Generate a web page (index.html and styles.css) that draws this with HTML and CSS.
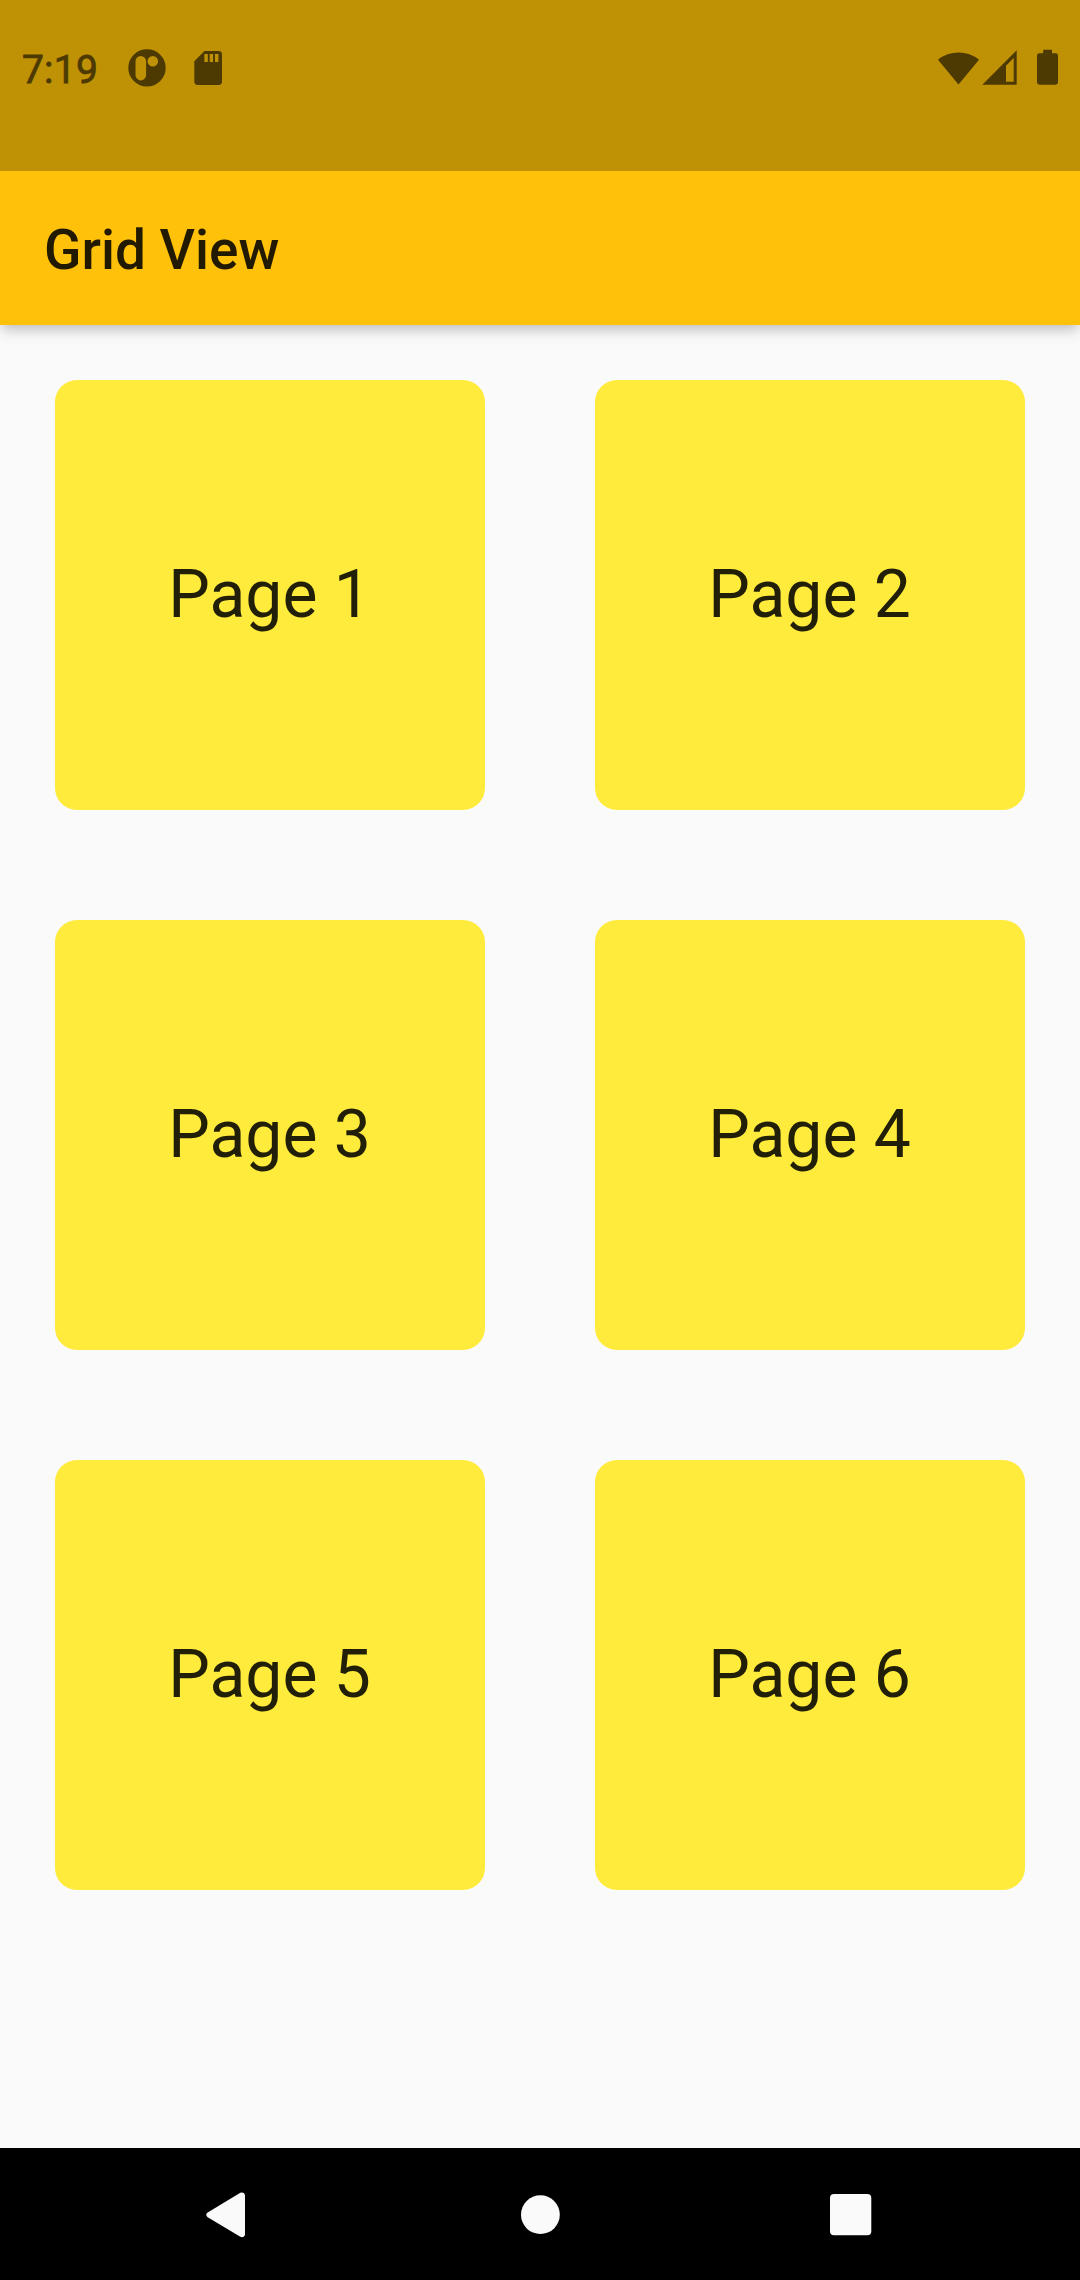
FILE: index.html
```html
<!DOCTYPE html>
<html lang="en">
<head>
<meta charset="utf-8">
<title>Grid View</title>
<link rel="stylesheet" href="styles.css">
</head>
<body>
<div class="screen">
  <div class="status-bar">
    <div class="status-group">
      <span class="clock">7:19</span>
      <svg class="icon-app" width="38" height="38" viewBox="0 0 38 38"><path fill-rule="evenodd" d="M19 .2a18.7 18.7 0 1 1 0 37.4a18.7 18.7 0 1 1 0-37.4zM12.8 7a5.3 5.3 0 0 0-5.3 5.3v13.8a5.3 5.3 0 0 0 10.6 0V12.300a5.300 5.300 0 0 0-5.300-5.300zM24.800 7a5.300 5.300 0 1 0 0 10.600a5.300 5.300 0 1 0 0-10.600z"/></svg>
      <svg class="icon-sd" width="28" height="34" viewBox="0 0 28 34"><path fill-rule="evenodd" d="M10.500 0H24.600A3.400 3.400 0 0 1 28 3.400V30.600A3.400 3.400 0 0 1 24.600 34H3.700A3.400 3.400 0 0 1 .3 30.600V10.200zM10.400 3.100v8h3.400v-8zM15.700 3.100v8h3.400v-8zM21 3.100v8h3.400v-8z"/></svg>
    </div>
    <div class="status-group">
      <svg class="icon-wifi" width="41" height="35" viewBox="0 0 41 35"><path d="M0 9.700A32.500 32.500 0 0 1 41 9.700L20.500 34.600z"/></svg>
      <svg class="icon-signal" width="35" height="35" viewBox="0 0 35 35"><path fill-rule="evenodd" d="M34.700 .3V34.700H.3zM31.700 8L24 15.700V31.700H31.700z"/></svg>
      <svg class="icon-battery" width="21" height="36" viewBox="0 0 21 36"><path d="M6.200 .7H15V4.200H18.600A2.400 2.400 0 0 1 21 6.600V33.300A2.400 2.400 0 0 1 18.600 35.700H2.400A2.400 2.400 0 0 1 0 33.300V6.600A2.400 2.400 0 0 1 2.400 4.200H6.200z"/></svg>
    </div>
  </div>
  <header class="app-bar"><h1 class="title">Grid View</h1></header>
  <main class="grid">
    <div class="card">Page 1</div>
    <div class="card">Page 2</div>
    <div class="card">Page 3</div>
    <div class="card">Page 4</div>
    <div class="card">Page 5</div>
    <div class="card">Page 6</div>
  </main>
  <nav class="nav-bar">
    <svg width="39" height="46" viewBox="0 0 39 46"><path d="M1.300 20.700L34.300 .8Q37.500-.4 39 2.500V43Q37.500 46.200 34.300 44.800L1.300 24.900Q-.8 22.800 1.300 20.700z"/></svg>
    <svg width="40" height="40" viewBox="0 0 40 40"><circle cx="20.400" cy="19.700" r="19.400"/></svg>
    <svg width="42" height="42" viewBox="0 0 42 42"><rect width="41.300" height="41.300" rx="4"/></svg>
  </nav>
</div>
</body>
</html>
```
FILE: styles.css
```css
* {
  box-sizing: border-box;
}

body {
  margin: 0;
  font-family: Roboto, sans-serif;
}

svg {
  display: block;
  flex: none;
}

.screen {
  display: flex;
  flex-direction: column;
  width: 1080px;
  height: 2280px;
  background: #fafafa;
}

.status-bar {
  position: relative;
  z-index: 2;
  display: flex;
  justify-content: space-between;
  height: 171px;
  padding: 0 22px;
  background: #bf9105;
  color: #4c3a02;
  fill: #4c3a02;
}

.status-group {
  display: flex;
  align-items: center;
  height: 135px;
}

.clock {
  width: 77px;
  font-size: 39px;
  font-weight: 400;
  letter-spacing: 0.2px;
  -webkit-text-stroke: 0.8px #4c3a02;
  line-height: 46px;
  margin-top: 5px;
}

.icon-app {
  margin-left: 29px;
}

.icon-sd {
  margin-left: 27.5px;
}

.icon-wifi,
.icon-signal {
  margin-top: -1px;
}

.icon-signal {
  margin-left: 3px;
}

.icon-battery {
  margin-top: -1px;
  margin-left: 20px;
}

.app-bar {
  position: relative;
  display: flex;
  align-items: center;
  height: 154px;
  padding: 4px 44px 0;
  background: #ffc10a;
  box-shadow: 0 7px 11px -3px rgba(0, 0, 0, 0.14),
    0 5px 16px rgba(0, 0, 0, 0.12);
}

.title {
  margin: 0;
  color: #211900;
  font-size: 55px;
  font-weight: 500;
  line-height: 64px;
}

.grid {
  display: grid;
  flex: 1;
  grid-template-columns: repeat(2, 430px);
  grid-auto-rows: 430px;
  gap: 110px;
  padding: 55px;
}

.card {
  display: flex;
  align-items: center;
  justify-content: center;
  padding: 0 1px 2px 0;
  border-radius: 22px;
  background: #ffeb3b;
  color: #211f08;
  font-size: 66px;
  line-height: 77px;
}

.nav-bar {
  display: grid;
  grid-template-columns: 314px 310px auto;
  align-items: center;
  height: 132px;
  padding: 1px 208px 0 206px;
  background: #000;
  fill: #fafafa;
}
```
